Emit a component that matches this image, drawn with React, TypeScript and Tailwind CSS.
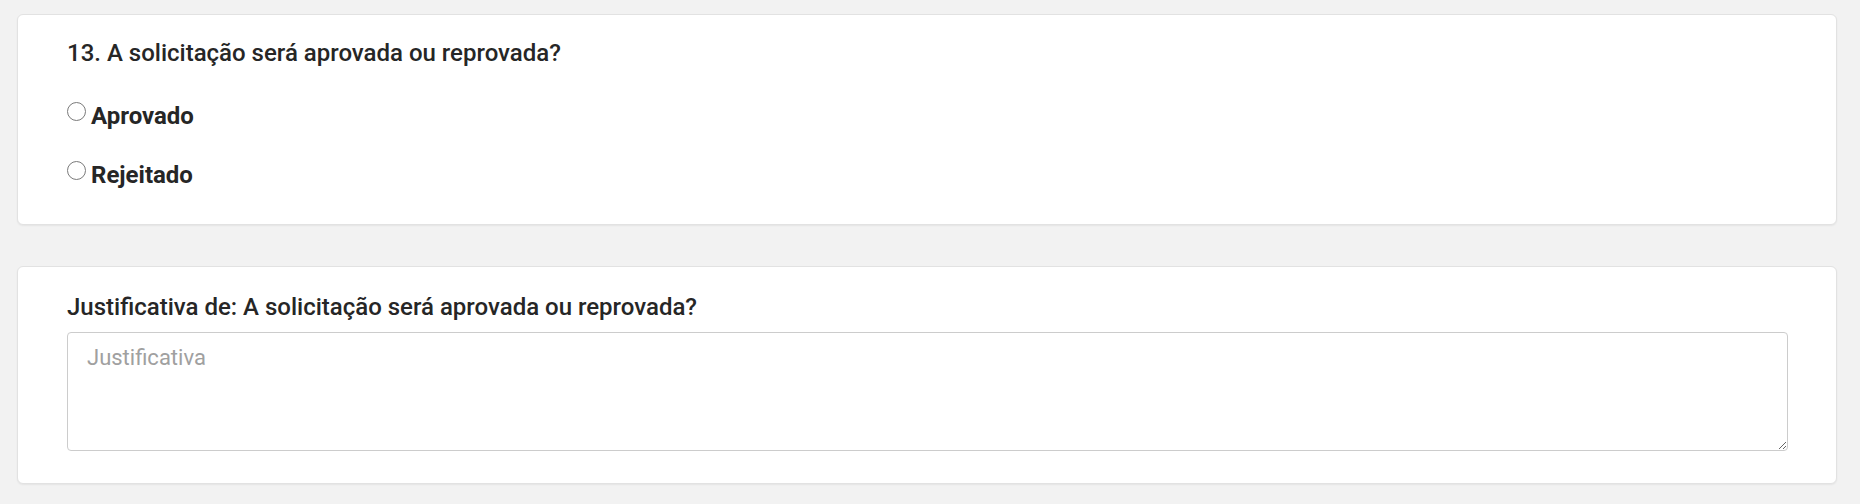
import React from 'react';

const OPTIONS = ['Aprovado', 'Rejeitado'];

function Radio({ label }: { label: string }) {
  return (
    <label className="flex items-center h-[28px] cursor-pointer">
      <span className="w-[19px] h-[19px] rounded-full border border-[#7a7a7a] bg-white mb-[9px] shrink-0" />
      <span className="ml-[5px] text-[24px] leading-[28px] font-bold text-[#262626]">{label}</span>
    </label>
  );
}

export default function App() {
  return (
    <div className="min-h-[504px] bg-[#f2f2f2] pt-[14px] pl-[17px] font-['Roboto',sans-serif]">
      {/* Question */}
      <div className="w-[1820px] bg-white rounded-md border border-[#e2e2e2] shadow-[0_1px_2px_rgba(0,0,0,0.06)] pl-[49px] pr-[49px] pt-[26px] pb-[35px]">
        <p className="text-[24px] leading-[24px] font-medium text-[#262626]">
          13. A solicitação será aprovada ou reprovada?
        </p>
        <div className="mt-[37px] flex flex-col gap-[31px]">
          {OPTIONS.map(o => (
            <Radio key={o} label={o} />
          ))}
        </div>
      </div>

      {/* Justification */}
      <div className="mt-[41px] w-[1820px] bg-white rounded-md border border-[#e2e2e2] shadow-[0_1px_2px_rgba(0,0,0,0.06)] pl-[49px] pr-[48px] pt-[28px] pb-[32px]">
        <p className="text-[24px] leading-[24px] font-medium text-[#262626]">
          Justificativa de: A solicitação será aprovada ou reprovada?
        </p>
        <textarea
          placeholder="Justificativa"
          className="mt-[13px] block w-full h-[119px] rounded-[4px] border border-[#cccccc] px-[19px] pt-[11px] pb-[8px] text-[22px] leading-[28px] text-[#333] placeholder:text-[#a0a0a0] outline-none"
        />
      </div>
    </div>
  );
}
